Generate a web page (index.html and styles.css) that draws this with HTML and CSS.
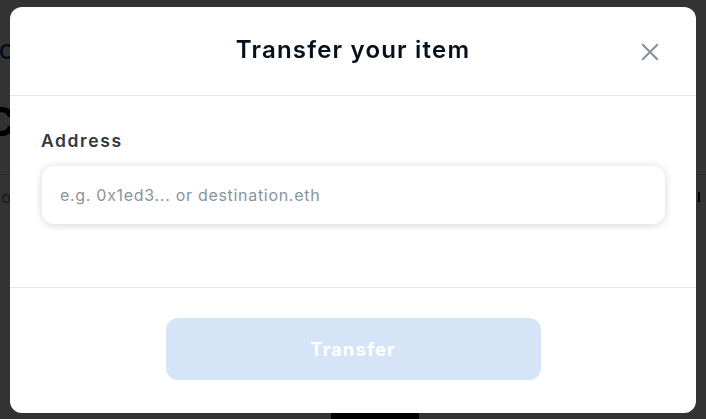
FILE: index.html
```html
<!DOCTYPE html>
<html lang="en">
<head>
<meta charset="utf-8">
<title>Transfer your item</title>
<link rel="stylesheet" href="styles.css">
</head>
<body>
<div class="page">
  <nav class="nav"><span class="nav-link">Create</span></nav>
  <h1 class="page-title">Collection</h1>
  <div class="page-rule"></div>
  <div class="page-row">
    <span class="page-text">collection details</span>
    <span class="page-mark"></span>
  </div>
  <div class="page-bottom"><span class="page-btn"></span></div>
</div>

<div class="overlay">
  <div class="modal" role="dialog" aria-labelledby="modal-title">
    <header class="modal-header">
      <h2 class="modal-title" id="modal-title">Transfer your item</h2>
      <button class="close" aria-label="Close">
        <svg width="18" height="18" viewBox="0 0 18 18" fill="none">
          <path d="M2 2L16 16M16 2L2 16" stroke="#8a939b" stroke-width="2.2" stroke-linecap="square"/>
        </svg>
      </button>
    </header>
    <section class="modal-body">
      <label class="label" for="addr">Address</label>
      <input class="input" id="addr" type="text" placeholder="e.g. 0x1ed3... or destination.eth">
    </section>
    <footer class="modal-footer">
      <button class="primary" disabled>Transfer</button>
    </footer>
  </div>
</div>
</body>
</html>
```

FILE: styles.css
```css
html, body {
  margin: 0;
  padding: 0;
  height: 100%;
  background: #ffffff;
  font-family: "Inter", "Noto Sans", sans-serif;
  overflow: hidden;
}

.page {
  height: 100%;
  display: flex;
  flex-direction: column;
}

.nav {
  height: 40px;
  padding-top: 42px;
  box-sizing: border-box;
  display: flex;
}

.nav-link {
  font-size: 20px;
  font-weight: 600;
  color: #1d3d8f;
  margin-left: -1px;
  line-height: 1;
}

.page-title {
  margin: 60px 0 0 -14px;
  font-size: 40px;
  font-weight: 700;
  color: #000;
  line-height: 1;
}

.page-rule {
  margin-top: 32px;
  height: 1px;
  background: #c8ccd0;
}

.page-row {
  display: flex;
  justify-content: space-between;
  align-items: center;
  margin-top: 12px;
}

.page-text {
  margin-left: -8px;
  font-size: 16px;
  color: #707a83;
}

.page-mark {
  width: 2px;
  height: 10px;
  background: #000;
  margin-right: 6px;
}

.page-bottom {
  margin-top: auto;
  display: flex;
  justify-content: center;
}

.page-btn {
  width: 88px;
  height: 8px;
  background: #000;
  border-radius: 4px 4px 0 0;
  margin-left: 44px;
}

.overlay {
  position: fixed;
  inset: 0;
  background: rgba(0, 0, 0, 0.8);
  display: flex;
  align-items: center;
  justify-content: center;
}

.modal {
  width: 686px;
  height: 406px;
  background: #ffffff;
  border-radius: 12px;
  display: flex;
  flex-direction: column;
  font-family: "Inter", "Noto Sans", sans-serif;
  color: #04111d;
}

.modal-header {
  height: 89px;
  box-sizing: border-box;
  border-bottom: 1px solid #e5e8eb;
  display: flex;
  align-items: center;
  justify-content: center;
  position: relative;
}

.modal-title {
  margin: 0;
  font-size: 24px;
  font-weight: 600;
  letter-spacing: 1.2px;
  line-height: 1.2;
}

.close {
  position: absolute;
  right: 37px;
  top: 36px;
  width: 18px;
  height: 18px;
  padding: 0;
  border: 0;
  background: none;
  display: flex;
}

.modal-body {
  flex: 0 0 192px;
  box-sizing: border-box;
  border-bottom: 1px solid #e5e8eb;
  padding: 33px 31px 0 32px;
  display: flex;
  flex-direction: column;
}

.label {
  font-size: 17.5px;
  font-weight: 600;
  letter-spacing: 1.6px;
  color: #353840;
  margin-left: -1px;
  line-height: 24px;
}

.input {
  margin-top: 13px;
  height: 58px;
  box-sizing: border-box;
  border: 0;
  border-radius: 12px;
  padding: 0 18px;
  font-family: "Inter", "Noto Sans", sans-serif;
  font-size: 16px;
  letter-spacing: 0.7px;
  color: #04111d;
  background: #fff;
  box-shadow: 0 1px 9px rgba(4, 17, 29, 0.18);
  outline: none;
}

.input::placeholder {
  color: #8a939b;
}

.modal-footer {
  flex: 1;
  display: flex;
  justify-content: center;
  padding-top: 30px;
}

.primary {
  width: 375px;
  height: 62px;
  border: 0;
  border-radius: 12px;
  background: #d5e5f7;
  color: #ffffff;
  font-family: "Inter", "Noto Sans", sans-serif;
  font-size: 18.5px;
  font-weight: 700;
  letter-spacing: 1.1px;
}
```
